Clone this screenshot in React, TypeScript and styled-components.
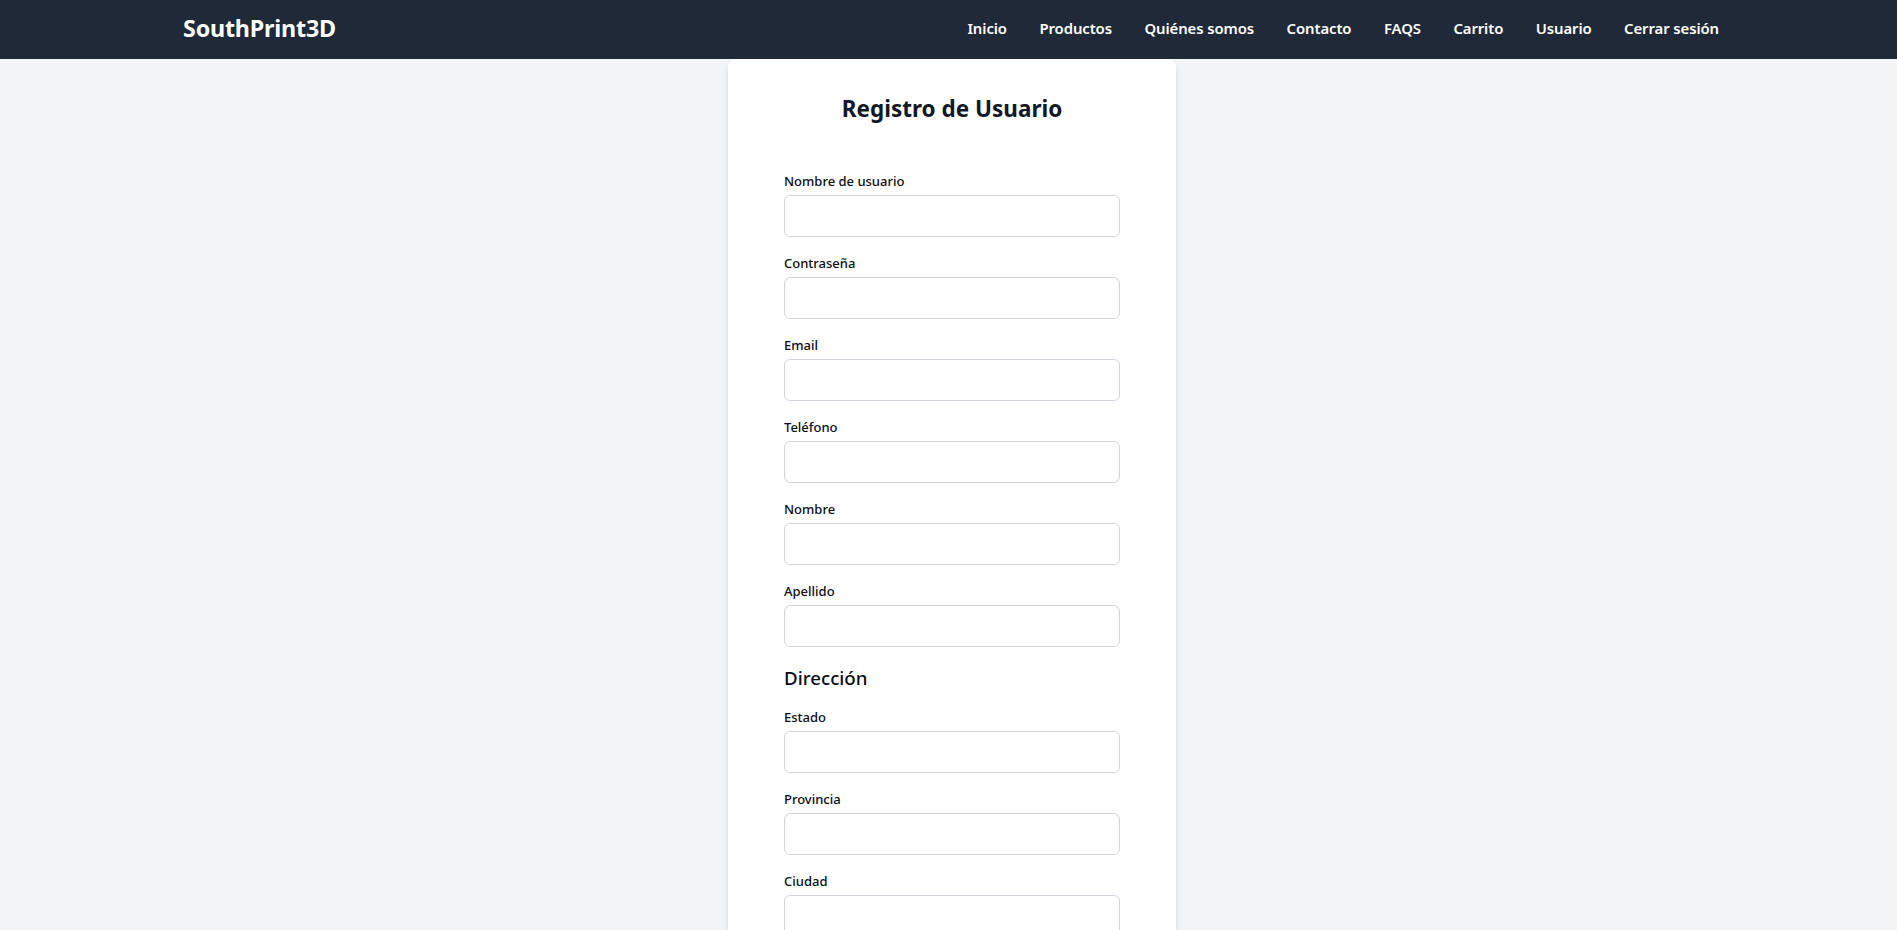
import React from "react";
import styled, { createGlobalStyle } from "styled-components";

const GlobalStyle = createGlobalStyle`
  * { box-sizing: border-box; }
  html, body { margin: 0; padding: 0; }
  body {
    background: #f3f4f6;
    font-family: "Noto Sans", "Open Sans", Arial, sans-serif;
    color: #111827;
  }
`;

const NavBar = styled.header`
  background: #1f2937;
  height: 59px;
  display: flex;
  align-items: center;
  padding-bottom: 4px;
`;

const NavInner = styled.div`
  width: 1536px;
  margin-left: calc(50% - 765.5px);
  display: flex;
  align-items: center;
  justify-content: space-between;
`;

const Logo = styled.a`
  color: #ffffff;
  font-size: 23.3px;
  font-weight: 700;
  line-height: 32px;
  text-decoration: none;
  letter-spacing: -0.2px;
`;

const NavLinks = styled.nav`
  display: flex;
  align-items: center;
  gap: 32.5px;
`;

const NavLink = styled.a`
  color: #ffffff;
  font-size: 14.9px;
  font-weight: 600;
  line-height: 24px;
  text-decoration: none;
  letter-spacing: -0.1px;
`;

const Main = styled.main`
  display: flex;
`;

const Card = styled.section`
  width: 448px;
  margin-left: calc(50% - 220.5px);
  background: #ffffff;
  border-radius: 8px;
  box-shadow: 0 4px 8px -1px rgba(0, 0, 0, 0.1), 0 2px 6px -2px rgba(0, 0, 0, 0.08);
  padding: 34px 56px 40px;
`;

const Title = styled.h1`
  margin: 0 0 46px;
  text-align: center;
  font-size: 22.5px;
  font-weight: 700;
  line-height: 32px;
  color: #111827;
`;

const Form = styled.form`
  display: flex;
  flex-direction: column;
`;

const Field = styled.div`
  display: flex;
  flex-direction: column;
  margin-bottom: 16px;
`;

const Label = styled.label`
  font-size: 13px;
  line-height: 20px;
  font-weight: 500;
  color: #0b0b14;
  margin-bottom: 4px;
`;

const Input = styled.input`
  height: 42px;
  width: 100%;
  border: 1px solid #d1d5db;
  border-radius: 6px;
  padding: 8px 12px;
  font-size: 16px;
  font-family: inherit;
  background: #ffffff;
  outline: none;
`;

const SectionTitle = styled.h2`
  margin: 1px 0 15px;
  font-size: 18.7px;
  font-weight: 500;
  line-height: 28px;
  color: #0b0b14;
`;

const navItems = [
  "Inicio",
  "Productos",
  "Quiénes somos",
  "Contacto",
  "FAQS",
  "Carrito",
  "Usuario",
  "Cerrar sesión",
];

const userFields = [
  { id: "username", label: "Nombre de usuario", type: "text" },
  { id: "password", label: "Contraseña", type: "password" },
  { id: "email", label: "Email", type: "email" },
  { id: "phone", label: "Teléfono", type: "tel" },
  { id: "firstName", label: "Nombre", type: "text" },
  { id: "lastName", label: "Apellido", type: "text" },
];

const addressFields = [
  { id: "state", label: "Estado", type: "text" },
  { id: "province", label: "Provincia", type: "text" },
  { id: "city", label: "Ciudad", type: "text" },
];

type FieldDef = { id: string; label: string; type: string };

const FormField = ({ id, label, type }: FieldDef) => (
  <Field>
    <Label htmlFor={id}>{label}</Label>
    <Input id={id} name={id} type={type} />
  </Field>
);

export default function App() {
  return (
    <>
      <GlobalStyle />
      <NavBar>
        <NavInner>
          <Logo href="#">SouthPrint3D</Logo>
          <NavLinks>
            {navItems.map((item) => (
              <NavLink key={item} href="#">
                {item}
              </NavLink>
            ))}
          </NavLinks>
        </NavInner>
      </NavBar>
      <Main>
        <Card>
          <Title>Registro de Usuario</Title>
          <Form onSubmit={(e) => e.preventDefault()}>
            {userFields.map((f) => (
              <FormField key={f.id} {...f} />
            ))}
            <SectionTitle>Dirección</SectionTitle>
            {addressFields.map((f) => (
              <FormField key={f.id} {...f} />
            ))}
          </Form>
        </Card>
      </Main>
    </>
  );
}
